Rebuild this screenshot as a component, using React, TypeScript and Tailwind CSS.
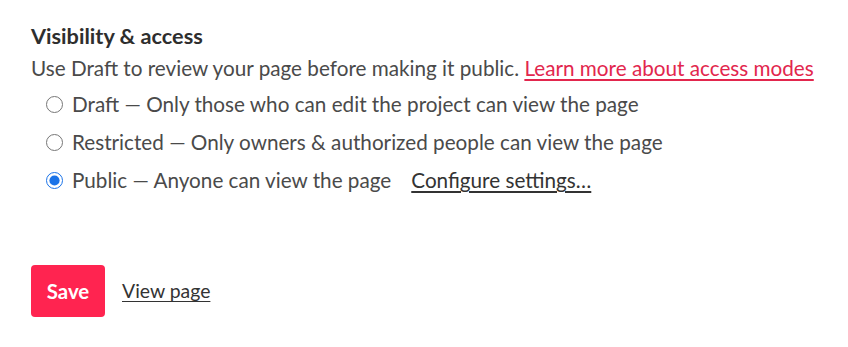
const App = () => {
    return (
        <div className="px-[31px] pt-[22px] text-[20.7px] text-[#4a4a4a]" style={{ fontFamily: "Lato, 'Liberation Sans', sans-serif" }}>
            {/* HEADING */}
            <h2 className="font-bold text-[21.7px] text-[#2e2e2e] leading-[28px]">Visibility &amp; access</h2>
            <p className="leading-[28px] mt-[4px]">
                Use Draft to review your page before making it public.{" "}
                <a href="#" className="text-[#e2264d] underline underline-offset-[3px]">Learn more about access modes</a>
            </p>
            {/* OPTIONS */}
            <div className="flex flex-col gap-[10px] mt-[8px] pl-[15px]">
                <label className="flex items-center gap-[9px] leading-[28px]">
                    <input type="radio" name="vis" className="w-[17px] h-[17px] m-0 accent-[#1a73e8]" />
                    <span>Draft — Only those who can edit the project can view the page</span>
                </label>
                <label className="flex items-center gap-[9px] leading-[28px]">
                    <input type="radio" name="vis" className="w-[17px] h-[17px] m-0 accent-[#1a73e8]" />
                    <span>Restricted — Only owners &amp; authorized people can view the page</span>
                </label>
                <label className="flex items-center gap-[9px] leading-[28px]">
                    <input type="radio" name="vis" defaultChecked className="w-[17px] h-[17px] m-0 accent-[#1a73e8]" />
                    <span>Public — Anyone can view the page</span>
                    <a href="#" className="ml-[11px] text-[#333] underline underline-offset-[3px]">Configure settings…</a>
                </label>
            </div>
            {/* ACTIONS */}
            <div className="flex items-center gap-[17px] mt-[71px]">
                <button className="bg-[#ff2450] text-white text-[20.4px] font-bold rounded-[4px] w-[74px] h-[52px]">Save</button>
                <a href="#" className="text-[19.4px] text-[#333] underline underline-offset-[3px]">View page</a>
            </div>
        </div>
    )
}
export default App
